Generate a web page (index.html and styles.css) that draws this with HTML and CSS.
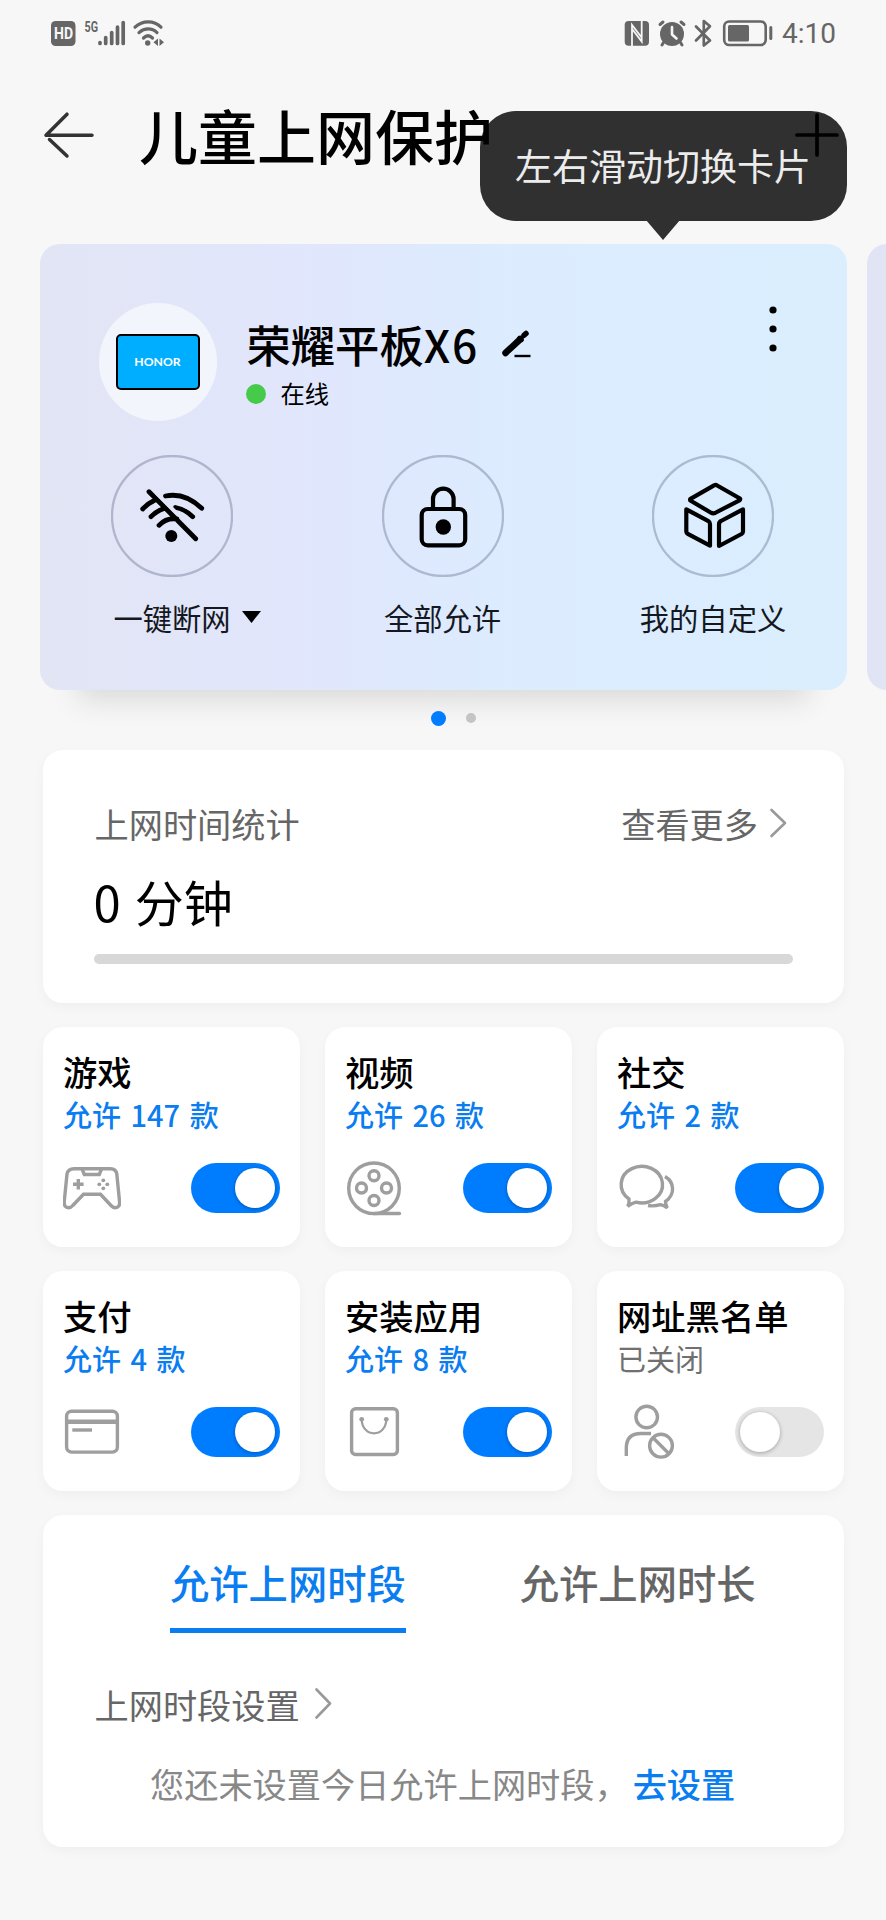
FILE: index.html
```html
<!DOCTYPE html>
<html lang="zh-CN">
<head>
<meta charset="utf-8">
<title>儿童上网保护</title>
<link rel="stylesheet" href="styles.css">
</head>
<body>
<div class="screen">
  <div class="status-bar">
    <svg class="status-left" width="116" height="30" viewBox="0 0 116 30">
      <rect x="0" y="3" width="24.5" height="25" rx="4.5" fill="#666"/>
      <text x="3" y="21.3" class="hd-text" textLength="19" lengthAdjust="spacingAndGlyphs">HD</text>
      <text x="33.5" y="13.8" class="g5-text" textLength="13.5" lengthAdjust="spacingAndGlyphs">5G</text>
      <g stroke="#666" stroke-width="3.7" stroke-linecap="round">
        <path d="M49 24.6v.8M54.7 19.5v6M60.7 14.5v11M66.5 9.2v16.3M72.2 4.5v21"/>
      </g>
      <g stroke="#666" stroke-width="3.2" fill="none" stroke-linecap="round">
        <path d="M84 9.2C91.5 2 103 2 110 9.2M88 14.6C93.5 9.7 101 9.7 106 14.6M92.5 20C95.5 17 98.5 17 101.5 20"/>
      </g>
      <circle cx="96.7" cy="25" r="2.7" fill="#666"/>
      <path d="M102.5 24.3l4.5-3.8v7.5zM113 24.3l-4.5-3.8v7.5z" fill="#666"/>
    </svg>
    <svg class="status-right" width="150" height="30" viewBox="0 0 150 30">
      <rect x=".7" y="3" width="24.3" height="24.7" rx="4" fill="#666"/>
      <path d="M8 28V7L18 20M17.7 3V23.500L8.500 11.500" fill="none" stroke="#f7f7f7" stroke-width="1.800"/>
      <circle cx="48" cy="16" r="12" fill="#666"/>
      <g fill="none" stroke="#666" stroke-width="3" stroke-linecap="round">
        <path d="M36 6.5l3-2.5M60 6.5l-3-2.5M39.5 24.5l-1.5 2.5M56.5 24.5l1.500 2.5"/>
      </g>
      <path d="M48 9v7.5l4.5 4" fill="none" stroke="#f7f7f7" stroke-width="2.6" stroke-linecap="round" stroke-linejoin="round"/>
      <path d="M72 8.5L86 22.5L79.8 27.5V3L86 8.2L72 22.5" fill="none" stroke="#666" stroke-width="2.7" stroke-linecap="round" stroke-linejoin="round"/>
      <rect x="100.2" y="3.5" width="41.5" height="23.5" rx="5" fill="none" stroke="#666" stroke-width="2.6"/>
      <rect x="104" y="7" width="21" height="16.5" rx="1.5" fill="#666"/>
      <path d="M146.8 9.5v11" stroke="#666" stroke-width="3" stroke-linecap="round"/>
    </svg>
    <span class="clock">4:10</span>
  </div>

  <div class="header">
    <svg class="back" width="54" height="50" viewBox="0 0 54 50">
      <path d="M4 25.2H50M4 25.2L25 4.2M7.5 29.5L25 46" fill="none" stroke="#333" stroke-width="3.5" stroke-linecap="round" stroke-linejoin="round"/>
    </svg>
    <h1 class="title">儿童上网保护</h1>
    <svg class="add" width="46" height="46" viewBox="0 0 46 46">
      <path d="M23 3V43M3 23H43" stroke="#000" stroke-width="3.7" stroke-linecap="round"/>
    </svg>
    <div class="tooltip">左右滑动切换卡片</div>
  </div>

  <div class="carousel">
    <section class="device-card">
      <div class="device">
        <div class="avatar"><div class="tablet">HONOR</div></div>
        <div class="device-info">
          <div class="device-name">荣耀平板<span class="model">X6</span>
            <svg class="edit" width="32" height="30" viewBox="0 0 32 30">
              <path d="M5.5 24L20.5 10" stroke="#000" stroke-width="6.5" stroke-linecap="round"/>
              <path d="M18 7.5L23 12.5" stroke="#000" stroke-width="3"/>
              <path d="M24 6.3L26 4.5" stroke="#000" stroke-width="5.5" stroke-linecap="round"/>
              <path d="M14.500 27H30.500" stroke="#000" stroke-width="2.4"/>
            </svg>
          </div>
          <div class="online"><span class="online-dot"></span>在线</div>
        </div>
        <svg class="menu" width="10" height="48" viewBox="0 0 10 48">
          <circle cx="5" cy="5" r="3.6"/><circle cx="5" cy="24" r="3.6"/><circle cx="5" cy="43" r="3.6"/>
        </svg>
      </div>
      <div class="actions">
        <div class="action">
          <svg class="action-icon" width="122" height="122" viewBox="0 0 122 122">
            <circle class="ring" cx="61" cy="61" r="60"/>
            <path class="ink" d="M38 36.7L84.7 83.7M54.5 41C67 38.5 80 43 90.7 53.3M31.7 54Q37 48.3 44 45M64.5 52.5Q73.5 54 81.7 61.7M40 61.7Q45.5 56 52.5 53.7M48 70.3Q55.5 62.5 66 64"/>
            <path class="gap" d="M45.3 37.7L66.5 59"/>
            <circle cx="60.3" cy="81" r="6"/>
          </svg>
          <div class="action-label">一键断网<svg class="caret" width="19" height="12" viewBox="0 0 19 12"><path d="M0 0H19L9.5 12z"/></svg></div>
        </div>
        <div class="action">
          <svg class="action-icon" width="122" height="122" viewBox="0 0 122 122">
            <circle class="ring" cx="61" cy="61" r="60"/>
            <rect class="ink thin" x="39.7" y="54" width="43.5" height="36.3" rx="6"/>
            <path class="ink thin" d="M51 54V44a10.3 10.3 0 0 1 20.6 0V54"/>
            <circle cx="61.3" cy="72" r="7.7"/>
          </svg>
          <div class="action-label">全部允许</div>
        </div>
        <div class="action">
          <svg class="action-icon" width="122" height="122" viewBox="0 0 122 122">
            <circle class="ring" cx="61" cy="61" r="60"/>
            <path class="ink thin" d="M64.3 30L88 43.5Q88.5 44.5 87.5 45.3L63 58Q61 58.8 59 57.7L38.3 45.5Q37.8 44.5 38.5 43.8L62.5 30.2Q63.5 29.6 64.3 30zM34.3 54.3L56 65.8Q58 67 58 69V90.7L35.8 78.8Q34.3 78 34.3 76.5zM91 54.3L69 66Q67 67 67 69.5V91L89.5 79Q91 78 91 76.5z"/>
          </svg>
          <div class="action-label">我的自定义</div>
        </div>
      </div>
    </section>
    <section class="device-card next"></section>
  </div>
  <div class="pager"><span class="page active"></span><span class="page"></span></div>

  <section class="panel stats">
    <div class="stats-head">
      <span>上网时间统计</span>
      <span class="more">查看更多<svg class="chevron" width="18" height="32" viewBox="0 0 18 32"><path d="M2.5 3L16 16L2.5 29"/></svg></span>
    </div>
    <div class="minutes">0 分钟</div>
    <div class="bar"></div>
  </section>

  <div class="grid">
    <section class="panel cell">
      <div class="cell-title">游戏</div>
      <div class="cell-sub">允许 147 款</div>
      <div class="cell-row">
        <svg class="icon" width="58" height="56" viewBox="0 0 58 56">
          <path d="M11 8.7H47.5Q53 8.7 53.8 14L56.6 42Q56.8 47.7 52.3 47.7Q50 47.7 48 45.5L37.5 34.3H20.5L9.8 45.5Q8 47.7 5.5 47.7Q1 47.7 1.2 42L4 14Q5 8.7 11 8.7Z"/>
          <path d="M19.3 9.5L21.3 14.5H36.3L38.3 9.5M15.3 19v10.6M10 24.3h10.6"/>
          <g class="solid"><circle cx="40.3" cy="20.3" r="1.9"/><circle cx="40.3" cy="28.3" r="1.9"/><circle cx="36.3" cy="24.3" r="1.9"/><circle cx="44.3" cy="24.3" r="1.9"/></g>
        </svg>
        <span class="switch on"></span>
      </div>
    </section>
    <section class="panel cell">
      <div class="cell-title">视频</div>
      <div class="cell-sub">允许 26 款</div>
      <div class="cell-row">
        <svg class="icon" width="58" height="56" viewBox="0 0 58 56">
          <circle cx="29" cy="28.3" r="25.3"/>
          <circle cx="29" cy="15.8" r="5"/><circle cx="29" cy="40.5" r="5"/><circle cx="16.5" cy="28" r="5"/><circle cx="41.5" cy="28" r="5"/>
          <path d="M29 53.5H54.5" stroke-linecap="round"/>
        </svg>
        <span class="switch on"></span>
      </div>
    </section>
    <section class="panel cell">
      <div class="cell-title">社交</div>
      <div class="cell-sub">允许 2 款</div>
      <div class="cell-row">
        <svg class="icon" width="58" height="56" viewBox="0 0 58 56">
          <path d="M12 39A20.7 18.3 0 1 1 19 42.2Q14.5 43.3 10.7 46.3Q12.5 43 12 39Z"/>
          <path d="M48 16.5C57.5 22 58.5 34.5 48.5 41.5Q48.5 45 50.3 48Q47 45.5 43.5 44.7Q37 46.5 31 45.5"/>
        </svg>
        <span class="switch on"></span>
      </div>
    </section>
    <section class="panel cell">
      <div class="cell-title">支付</div>
      <div class="cell-sub">允许 4 款</div>
      <div class="cell-row">
        <svg class="icon" width="58" height="56" viewBox="0 0 58 56">
          <rect x="3.6" y="7.3" width="50.8" height="40.8" rx="5"/>
          <path d="M3.6 17.8H54.4" stroke-width="4.5"/>
          <path d="M9.3 26H29"/>
        </svg>
        <span class="switch on"></span>
      </div>
    </section>
    <section class="panel cell">
      <div class="cell-title">安装应用</div>
      <div class="cell-sub">允许 8 款</div>
      <div class="cell-row">
        <svg class="icon" width="58" height="56" viewBox="0 0 58 56">
          <rect x="6.6" y="4.7" width="45.8" height="45.8" rx="4"/>
          <path d="M16.7 15.3C17 34 41 34 41.3 15.3" stroke-width="2.2"/>
          <g class="solid"><circle cx="16.7" cy="15.3" r="2.4"/><circle cx="41.3" cy="15.3" r="2.4"/></g>
        </svg>
        <span class="switch on"></span>
      </div>
    </section>
    <section class="panel cell">
      <div class="cell-title">网址黑名单</div>
      <div class="cell-sub off-text">已关闭</div>
      <div class="cell-row">
        <svg class="icon" width="58" height="56" viewBox="0 0 58 56">
          <circle cx="29.7" cy="13" r="10.8"/>
          <path d="M9.3 52V44Q9.3 29.5 24 29.5H34"/>
          <circle cx="44" cy="41.7" r="11.4"/>
          <path d="M36 33.7L52 49.7"/>
        </svg>
        <span class="switch"></span>
      </div>
    </section>
  </div>

  <section class="panel schedule">
    <div class="tabs"><span class="tab selected">允许上网时段</span><span class="tab">允许上网时长</span></div>
    <div class="setting">上网时段设置<svg class="chevron" width="18" height="32" viewBox="0 0 18 32"><path d="M2.5 1.5L16 15.5L2.5 29.5"/></svg></div>
    <div class="hint">您还未设置今日允许上网时段，<span class="link">去设置</span></div>
  </section>
</div>
</body>
</html>
```
FILE: styles.css
```css
* { box-sizing: border-box; }

body {
  margin: 0;
  background: #f7f7f7;
  color: #000;
  font-family: "Noto Sans CJK SC", sans-serif;
}

svg { display: block; flex: none; }

.screen { width: 886px; height: 1920px; overflow: hidden; }

/* Status bar */
.status-bar { display: flex; height: 54px; padding: 18px 0 0 51px; }
.status-right { margin-left: 457px; }
.hd-text { font: bold 16px Roboto, sans-serif; fill: #f7f7f7; }
.g5-text { font: bold 14.5px Roboto, sans-serif; fill: #666; }
.clock { margin-left: 8px; font: 28px/32px Roboto, sans-serif; color: #666; }

/* Header */
.header { position: relative; display: flex; align-items: center; height: 162px; padding-left: 42px; }
.title { position: relative; z-index: 1; margin: 0 0 0 43px; font-size: 59px; line-height: 80px; font-weight: 500; }
.add { position: relative; z-index: 1; margin-left: auto; margin-right: 46px; }
.tooltip {
  position: absolute; left: 480px; top: 57px;
  width: 367px; height: 110px; padding-left: 35px;
  border-radius: 36px; background: #303030; color: #ececec;
  font-size: 37px; line-height: 109px; white-space: nowrap;
}
.tooltip::after {
  content: ""; position: absolute; left: 166px; top: 109px;
  border: solid transparent; border-width: 20.5px 17px 0; border-top-color: #303030;
}

/* Device carousel */
.carousel { display: flex; gap: 20px; padding: 28px 0 0 39.5px; }
.device-card {
  flex: none; width: 807px; height: 446px; padding: 59px 60px 0 59px;
  border-radius: 20px;
  background: linear-gradient(90deg, #e2e5f4 0%, #e1e6fc 30%, #dfe8fd 42%, #dcecfe 60%, #daeefe 100%);
  box-shadow: 0 48px 28px -38px rgba(0, 0, 0, .12);
}
.device-card.next { background: #e1e4f5; box-shadow: none; }
.device { display: flex; height: 118px; }
.avatar {
  display: grid; place-items: center; width: 118px; height: 118px;
  border-radius: 50%; background: #f3f5fc;
}
.tablet {
  width: 84px; height: 56px; border: 2.5px solid #000; border-radius: 5px; background: #00aeff;
  color: #fff; font: bold 12.2px/52px Lato, sans-serif; text-align: center;
}
.device-info { padding: 16px 0 0 30px; }
.device-name { display: flex; align-items: center; font-size: 44.3px; line-height: 50px; font-weight: 500; }
.model { letter-spacing: 2px; }
.edit { margin-left: 21px; }
.online { display: flex; align-items: center; gap: 15px; padding-top: 9px; font-size: 24.3px; line-height: 30px; }
.online-dot { width: 20px; height: 20px; margin: 2px 0 0 -1px; border-radius: 50%; background: #45cb49; }
.menu { margin: 2px 9px 0 auto; }
.actions { display: flex; justify-content: space-between; padding-top: 34px; }
.action { display: flex; flex-direction: column; align-items: center; width: 147px; }
.ring { fill: none; stroke: rgba(70, 80, 115, .32); stroke-width: 2.3; }
.ink { fill: none; stroke: #000; stroke-width: 4.8; stroke-linecap: round; stroke-linejoin: round; }
.ink.thin { stroke-width: 4.2; }
.gap { fill: none; stroke: #e2e5f6; stroke-width: 3.5; }
.action-label {
  display: flex; align-items: center; justify-content: center;
  margin-top: 20px; font-size: 29.3px; line-height: 40px; white-space: nowrap; color: #15181e;
}
.caret { margin: 0 -30px 0 11px; }

.pager { display: flex; align-items: center; gap: 19.5px; height: 56.5px; margin-bottom: 3px; padding-left: 431px; }
.page { width: 10px; height: 10px; border-radius: 50%; background: #c4c4c4; }
.page.active { width: 15px; height: 15px; background: #007dff; }

/* White panels */
.panel { border-radius: 20px; background: #fff; box-shadow: 0 4px 12px rgba(0, 0, 0, .035); }
.chevron { fill: none; stroke: #999; stroke-width: 2.6; stroke-linecap: round; stroke-linejoin: round; }

.stats { width: 800.5px; height: 253.5px; margin-left: 43px; padding: 53px 50.5px 0; color: #666; }
.stats-head { display: flex; justify-content: space-between; padding-left: 1px; font-size: 34.2px; line-height: 40px; }
.more { display: flex; align-items: center; padding-right: 6px; }
.more .chevron { margin-left: 11px; }
.minutes { margin-top: 28px; font-size: 49px; line-height: 60px; word-spacing: 3px; color: #000; }
.bar { height: 10px; margin-top: 23px; border-radius: 5px; background: #d8d8d8; }

.grid {
  display: grid; grid-template-columns: 256.5px 246.5px 246.5px; grid-auto-rows: 220px;
  gap: 24px 25.5px; margin: 24px 0 23.5px 43px;
}
.cell { padding: 21.5px 20px 0; }
.cell-title { font-size: 34.3px; line-height: 44px; font-weight: 500; }
.cell-sub { margin-top: 1px; font-size: 29px; line-height: 40px; font-weight: 500; word-spacing: 3px; color: #0a7df0; }
.cell-sub.off-text { color: #707070; font-weight: 400; }
.cell-row { display: flex; align-items: center; justify-content: space-between; margin-top: 26.5px; }
.icon { fill: none; stroke: #9e9e9e; stroke-width: 3.4; }
.solid { fill: #9e9e9e; stroke: none; }
.switch { display: flex; align-items: center; width: 88.5px; height: 49.5px; padding: 0 5px; border-radius: 25px; background: #e5e5e5; }
.switch::before { content: ""; width: 40px; height: 40px; border-radius: 50%; background: #fff; box-shadow: 0 1px 4px rgba(0, 0, 0, .3); }
.switch.on { justify-content: flex-end; background: #007dff; }

.schedule { width: 800.5px; height: 332px; margin-left: 43px; padding: 42px 0 0; }
.tabs { display: flex; gap: 114px; padding-left: 127px; font-size: 39.3px; line-height: 50px; font-weight: 500; color: #666; }
.tab { padding-bottom: 21px; border-bottom: 5px solid transparent; }
.tab.selected { color: #0a7df0; border-color: #0a7df0; }
.setting { display: flex; align-items: center; margin-top: 51px; padding-left: 51.5px; font-size: 34.2px; line-height: 40px; color: #666; }
.setting .chevron { margin-left: 14px; }
.hint { margin-top: 39px; padding-left: 107px; font-size: 34.2px; line-height: 40px; color: #888; white-space: nowrap; }
.link { margin-left: 4px; color: #0a7df0; font-weight: 500; }
```
